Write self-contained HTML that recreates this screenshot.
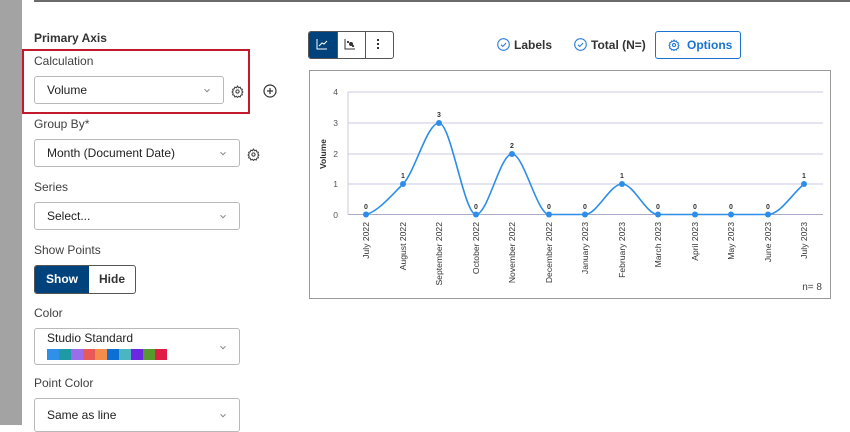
<!DOCTYPE html>
<html><head><meta charset="utf-8"><style>
*{box-sizing:border-box;margin:0;padding:0}
body{width:850px;height:425px;overflow:hidden;background:#fff;font-family:"Liberation Sans",sans-serif;color:#32363a;position:relative}
.a{position:absolute}
.lbl{position:absolute;font-size:12px;color:#404040}
.dd{position:absolute;border:1px solid #b9b9b9;border-radius:3px;background:#fff;font-size:12px;color:#222}
.dd .t{position:absolute;left:12px;top:50%;transform:translateY(-50%)}
.dd .c{position:absolute;right:14px;top:50%;width:4px;height:4px;border-right:1px solid #888;border-bottom:1px solid #888;transform:translateY(-60%) rotate(45deg)}
</style></head><body>
<div class="a" style="left:0;top:0;width:22px;height:425px;background:#a3a3a3"></div>
<div class="a" style="left:34px;top:0;width:816px;height:2px;background:#6b6b6b"></div>

<div class="lbl" style="left:34px;top:31px;font-weight:bold;color:#333">Primary Axis</div>
<div class="a" style="left:22px;top:49px;width:228px;height:65px;border:2px solid #c3192d"></div>
<div class="lbl" style="left:34px;top:54px">Calculation</div>
<div class="dd" style="left:34px;top:76px;width:190px;height:28px"><span class="t">Volume</span><span class="c"></span></div>
<svg class="a" style="left:231px;top:85px" width="13" height="13" viewBox="0 0 24 24" fill="none" stroke="#444" stroke-width="2"><circle cx="12" cy="12" r="3"/><path d="M12 2l2 3 3-1 1 3 3 1-1 3 2 2-2 2 1 3-3 1-1 3-3-1-2 2-2-2-3 1-1-3-3-1 1-3-2-2 2-2-1-3 3-1 1-3 3 1z"/></svg>
<svg class="a" style="left:263px;top:84px" width="14" height="14" viewBox="0 0 14 14" fill="none" stroke="#333" stroke-width="1.2"><circle cx="7" cy="7" r="6"/><path d="M7 4v6M4 7h6"/></svg>

<div class="lbl" style="left:34px;top:117px">Group By*</div>
<div class="dd" style="left:34px;top:139px;width:206px;height:28px"><span class="t">Month (Document Date)</span><span class="c"></span></div>
<svg class="a" style="left:247px;top:148px" width="13" height="13" viewBox="0 0 24 24" fill="none" stroke="#444" stroke-width="2"><circle cx="12" cy="12" r="3"/><path d="M12 2l2 3 3-1 1 3 3 1-1 3 2 2-2 2 1 3-3 1-1 3-3-1-2 2-2-2-3 1-1-3-3-1 1-3-2-2 2-2-1-3 3-1 1-3 3 1z"/></svg>

<div class="lbl" style="left:34px;top:180px">Series</div>
<div class="dd" style="left:34px;top:202px;width:206px;height:28px"><span class="t">Select...</span><span class="c"></span></div>

<div class="lbl" style="left:34px;top:243px">Show Points</div>
<div class="a" style="left:34px;top:265px;width:102px;height:29px;border:1px solid #555;border-radius:3px;overflow:hidden;font-size:12px;font-weight:bold">
<div class="a" style="left:0;top:0;width:54px;height:27px;background:#00427c;color:#fff;text-align:center;line-height:27px">Show</div>
<div class="a" style="left:54px;top:0;width:46px;height:27px;color:#333;text-align:center;line-height:27px">Hide</div></div>

<div class="lbl" style="left:34px;top:306px">Color</div>
<div class="dd" style="left:34px;top:328px;width:206px;height:37px"><span style="position:absolute;left:12px;top:2px">Studio Standard</span><span class="c"></span>
<div class="a" style="left:12px;top:20px;height:11px;display:flex">
<i style="width:12px;background:#3090e8"></i><i style="width:12px;background:#1d9aa5"></i><i style="width:12px;background:#9a6ee8"></i><i style="width:12px;background:#e85a5a"></i><i style="width:12px;background:#f58d4a"></i><i style="width:12px;background:#0b6fd4"></i><i style="width:12px;background:#4bb5c1"></i><i style="width:12px;background:#6b28e0"></i><i style="width:12px;background:#56992e"></i><i style="width:12px;background:#e01e45"></i></div></div>

<div class="lbl" style="left:34px;top:376px">Point Color</div>
<div class="dd" style="left:34px;top:398px;width:206px;height:34px"><span class="t">Same as line</span><span class="c"></span></div>

<!-- toolbar -->
<div class="a" style="left:308px;top:31px;width:86px;height:28px;border:1px solid #555;border-radius:3px;overflow:hidden">
<div class="a" style="left:0;top:0;width:28px;height:26px;background:#00427c"></div>
<div class="a" style="left:56px;top:0;width:1px;height:26px;background:#555"></div>
<div class="a" style="left:28px;top:0;width:1px;height:26px;background:#555"></div>
</div>
<svg class="a" style="left:316px;top:38px" width="12" height="12" fill="none" stroke="#fff" stroke-width="1"><path d="M1 1v10h10M3 8l3-3 2 1 3-3"/></svg>
<svg class="a" style="left:344px;top:38px" width="12" height="12" fill="none" stroke="#333" stroke-width="1"><path d="M1 1v10h10"/><circle cx="7" cy="6" r="1.5" fill="#333"/><circle cx="4" cy="4" r=".6" fill="#333"/><circle cx="9" cy="8" r=".6" fill="#333"/></svg>
<div class="a" style="left:377px;top:39px;width:2px;height:2px;background:#333;box-shadow:0 4px #333,0 8px #333"></div>

<svg class="a" style="left:497px;top:38px" width="13" height="13" fill="none" stroke="#2d7fd6" stroke-width="1.1"><circle cx="6.5" cy="6.5" r="5.8"/><path d="M4 6.7l1.8 1.8 3.3-3.5"/></svg>
<div class="a" style="left:514px;top:38px;font-size:12px;font-weight:bold;color:#333">Labels</div>
<svg class="a" style="left:574px;top:38px" width="13" height="13" fill="none" stroke="#2d7fd6" stroke-width="1.1"><circle cx="6.5" cy="6.5" r="5.8"/><path d="M4 6.7l1.8 1.8 3.3-3.5"/></svg>
<div class="a" style="left:591px;top:38px;font-size:12px;font-weight:bold;color:#333">Total (N=)</div>
<div class="a" style="left:655px;top:31px;width:86px;height:28px;border:1px solid #1a73d0;border-radius:3px"></div>
<svg class="a" style="left:668px;top:39px" width="12" height="12" viewBox="0 0 24 24" fill="none" stroke="#1a73d0" stroke-width="2"><circle cx="12" cy="12" r="3"/><path d="M12 2l2 3 3-1 1 3 3 1-1 3 2 2-2 2 1 3-3 1-1 3-3-1-2 2-2-2-3 1-1-3-3-1 1-3-2-2 2-2-1-3 3-1 1-3 3 1z"/></svg>
<div class="a" style="left:687px;top:38px;font-size:12px;font-weight:bold;color:#1a73d0">Options</div>

<!-- chart -->
<div class="a" style="left:309px;top:70px;width:522px;height:229px;border:1px solid #9a9a9a"></div>
<svg class="a" style="left:0;top:0" width="850" height="425" font-family="Liberation Sans, sans-serif">
<g stroke="#c8cbe0" stroke-width="1">
<line x1="348" y1="92" x2="823" y2="92"/><line x1="348" y1="123" x2="823" y2="123"/><line x1="348" y1="154" x2="823" y2="154"/><line x1="348" y1="184" x2="823" y2="184"/><line x1="348" y1="214.5" x2="823" y2="214.5" stroke="#a9acc8"/><line x1="348" y1="92" x2="348" y2="215"/>
</g>
<g font-size="8.5" fill="#555" text-anchor="end">
<text x="338" y="95">4</text><text x="338" y="126">3</text><text x="338" y="157">2</text><text x="338" y="187">1</text><text x="338" y="218">0</text></g>
<text transform="translate(326,154) rotate(-90)" font-size="8.5" font-weight="bold" fill="#333" text-anchor="middle">Volume</text>
<path d="M366 214.5C378 211.5 391 196 403 184C415 172 427 123 439 123C451 123 464 214.5 476 214.5C488 214.5 500 154 512 154C524 154 537 214.5 549 214.5L585 214.5C597 214.5 610 184 622 184C634 184 646 214.5 658 214.5L768 214.5C780 214.5 792 194 804 184" fill="none" stroke="#2d8de8" stroke-width="1.6"/>
<g fill="#2d8de8">
<circle cx="366" cy="214.5" r="3"/><circle cx="403" cy="184" r="3"/><circle cx="439" cy="123" r="3"/><circle cx="476" cy="214.5" r="3"/><circle cx="512" cy="154" r="3"/><circle cx="549" cy="214.5" r="3"/><circle cx="585" cy="214.5" r="3"/><circle cx="622" cy="184" r="3"/><circle cx="658" cy="214.5" r="3"/><circle cx="695" cy="214.5" r="3"/><circle cx="731" cy="214.5" r="3"/><circle cx="768" cy="214.5" r="3"/><circle cx="804" cy="184" r="3"/></g>
<g font-size="7" font-weight="bold" fill="#333" text-anchor="middle">
<text x="366" y="209">0</text><text x="403" y="178">1</text><text x="439" y="117">3</text><text x="476" y="209">0</text><text x="512" y="148">2</text><text x="549" y="209">0</text><text x="585" y="209">0</text><text x="622" y="178">1</text><text x="658" y="209">0</text><text x="695" y="209">0</text><text x="731" y="209">0</text><text x="768" y="209">0</text><text x="804" y="178">1</text></g>
<g font-size="8.6" fill="#333" text-anchor="end">
<text transform="translate(369,222) rotate(-90)">July 2022</text>
<text transform="translate(406,222) rotate(-90)">August 2022</text>
<text transform="translate(442,222) rotate(-90)">September 2022</text>
<text transform="translate(479,222) rotate(-90)">October 2022</text>
<text transform="translate(515,222) rotate(-90)">November 2022</text>
<text transform="translate(552,222) rotate(-90)">December 2022</text>
<text transform="translate(588,222) rotate(-90)">January 2023</text>
<text transform="translate(625,222) rotate(-90)">February 2023</text>
<text transform="translate(661,222) rotate(-90)">March 2023</text>
<text transform="translate(698,222) rotate(-90)">April 2023</text>
<text transform="translate(734,222) rotate(-90)">May 2023</text>
<text transform="translate(771,222) rotate(-90)">June 2023</text>
<text transform="translate(807,222) rotate(-90)">July 2023</text></g>
<text x="822" y="290" font-size="10" fill="#444" text-anchor="end">n= 8</text>
</svg>
</body></html>
